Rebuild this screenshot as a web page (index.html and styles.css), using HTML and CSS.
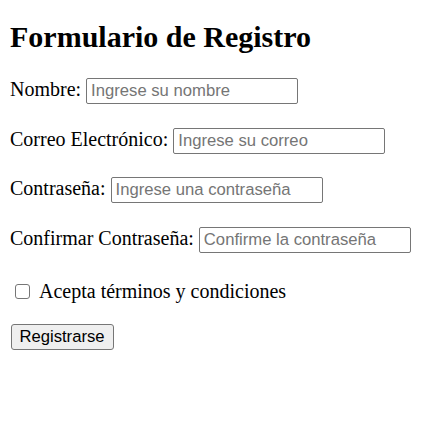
FILE: index.html
```html
<!DOCTYPE html>
<html lang="es">
<head>
<meta charset="utf-8">
<title>Formulario de Registro</title>
<link rel="stylesheet" href="styles.css">
</head>
<body>
<div class="page">
<h1 class="title">Formulario de Registro</h1>
<form class="form">
  <div class="row"><label for="n">Nombre:</label><input class="field" id="n" type="text" placeholder="Ingrese su nombre"></div>
  <div class="row"><label for="c">Correo Electrónico:</label><input class="field" id="c" type="email" placeholder="Ingrese su correo"></div>
  <div class="row"><label for="p">Contraseña:</label><input class="field" id="p" type="password" placeholder="Ingrese una contraseña"></div>
  <div class="row"><label for="p2">Confirmar Contraseña:</label><input class="field" id="p2" type="password" placeholder="Confirme la contraseña"></div>
  <div class="row check"><input class="box" id="t" type="checkbox"><label for="t">Acepta términos y condiciones</label></div>
  <div class="actions"><button class="btn" type="submit">Registrarse</button></div>
</form>
</div>
</body>
</html>
```
FILE: styles.css
```css
body {
  margin: 0;
  font-family: "Liberation Serif", "Times New Roman", serif;
  font-size: 20px;
  color: #000;
  background: #fff;
}
.page {
  padding: 10px;
}
.title {
  font-size: 30px;
  font-weight: bold;
  line-height: 34px;
  margin: 10px 0 24px;
}
.form {
  display: flex;
  flex-direction: column;
  align-items: flex-start;
}
.row {
  display: flex;
  align-items: baseline;
  gap: 5px;
  height: 26px;
  margin-bottom: 23.5px;
}
.field {
  font-family: "Liberation Sans", Arial, sans-serif;
  font-size: 16.67px;
  width: 212px;
  height: 26px;
  box-sizing: border-box;
  margin: 0;
  padding: 1px 4px;
  border: 1px solid #767676;
  border-radius: 2px;
  color: #000;
  background: #fff;
}
.field::placeholder { color: #757575; }
.check {
  align-items: center;
  height: 26px;
  margin-top: 2px;
  margin-bottom: 20px;
  gap: 9px;
}
.box {
  appearance: none;
  -webkit-appearance: none;
  width: 15px;
  height: 15px;
  margin: 0 0 0 5px;
  border: 1px solid #767676;
  border-radius: 3px;
  background: #fff;
}
.btn {
  font-family: "Liberation Sans", Arial, sans-serif;
  font-size: 16.67px;
  width: 103px;
  height: 26px;
  margin: 0 0 0 0.5px;
  padding: 0 7px;
  background: #efefef;
  border: 1px solid #767676;
  border-radius: 3px;
  color: #000;
}
```
